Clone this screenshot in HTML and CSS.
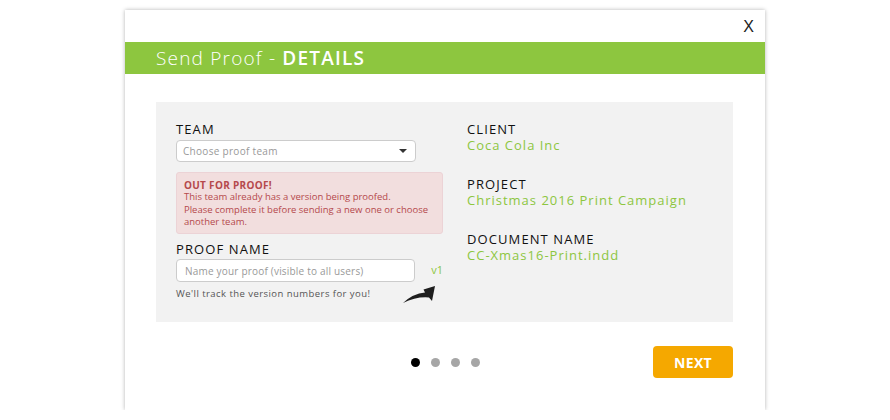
FILE: index.html
```html
<!DOCTYPE html>
<html>
<head>
<meta charset="utf-8">
<link rel="stylesheet" href="styles.css">
</head>
<body>
<div class="modal">
  <div class="topbar"><span class="close">X</span></div>
  <div class="titlebar">Send Proof - <b>DETAILS</b></div>
  <div class="content">
    <div class="panel">
      <div class="col-left">
        <div class="label">TEAM</div>
        <div class="select"><span>Choose proof team</span><span class="caret"></span></div>
        <div class="alert">
          <div class="alert-title">OUT FOR PROOF!</div>
          <div>This team already has a version being proofed.</div>
          <div>Please complete it before sending a new one or choose another team.</div>
        </div>
        <div class="label label-proof">PROOF NAME</div>
        <div class="proof-row">
          <div class="input">Name your proof (visible to all users)</div>
          <span class="version">v1</span>
        </div>
        <div class="helper-row">
          <span class="helper">We'll track the version numbers for you!</span>
          <svg class="arrow" width="34" height="19" viewBox="0 0 34 19"><path d="M1 18 Q11 8.5 23 7.5 L21.5 4.5 L33 1 L30 16 L27 12.5 Q14 11.5 1 18 Z" fill="#1e1e1e"/></svg>
        </div>
      </div>
      <div class="col-right">
        <div class="info"><div class="label">CLIENT</div><div class="value">Coca Cola Inc</div></div>
        <div class="info"><div class="label">PROJECT</div><div class="value">Christmas 2016 Print Campaign</div></div>
        <div class="info"><div class="label">DOCUMENT NAME</div><div class="value">CC-Xmas16-Print.indd</div></div>
      </div>
    </div>
    <div class="footer">
      <div class="dots"><span class="dot active"></span><span class="dot"></span><span class="dot"></span><span class="dot"></span></div>
      <button class="next">NEXT</button>
    </div>
  </div>
</div>
</body>
</html>
```
FILE: styles.css
```css
* { box-sizing: border-box; }
body {
  margin: 0;
  background: #fff;
  font-family: "Open Sans", "Liberation Sans", sans-serif;
  color: #111;
}
.modal {
  margin: 10px 0 0 125px;
  width: 640px;
  height: 400px;
  background: #fff;
  box-shadow: 0 0 4px rgba(0,0,0,0.3);
}
.topbar {
  height: 32px;
  display: flex;
  justify-content: flex-end;
  align-items: center;
  padding: 1px 11px 0 0;
}
.close {
  font-family: "Liberation Sans", sans-serif;
  font-size: 16px;
  color: #222;
}
.titlebar {
  height: 32px;
  background: #8dc63f;
  color: #fff;
  font-size: 19px;
  font-weight: 300;
  line-height: 32px;
  padding-left: 31px;
  letter-spacing: 1.2px;
}
.titlebar b { font-weight: 600; }
.content {
  padding: 28px 32px 0 31px;
}
.panel {
  background: #f2f2f2;
  height: 220px;
  display: flex;
  padding: 19px 20px 0 20px;
}
.col-left { width: 267px; }
.col-right { margin-left: 24px; }
.label {
  font-size: 13px;
  line-height: 16px;
  color: #111;
  letter-spacing: 1.1px;
}
.select {
  margin-top: 3px;
  width: 240px;
  height: 22px;
  background: #fff;
  border: 1px solid #ccc;
  border-radius: 4px;
  display: flex;
  align-items: center;
  justify-content: space-between;
  padding: 0 8px 0 6px;
  font-size: 10px;
  letter-spacing: 0.3px;
  color: #999;
}
.caret {
  width: 0; height: 0;
  border-left: 4px solid transparent;
  border-right: 4px solid transparent;
  border-top: 4px solid #333;
}
.alert {
  margin-top: 10px;
  height: 62px;
  background: #f2dede;
  border: 1px solid #ecd3d6;
  border-radius: 3px;
  padding: 6px 7px;
  font-size: 9.5px;
  line-height: 12.4px;
  color: #b5494c;
}
.alert-title { font-weight: 700; font-size: 10px; letter-spacing: 0.3px; }
.label-proof { margin-top: 7px; }
.proof-row {
  display: flex;
  align-items: center;
  margin-top: 2px;
}
.input {
  width: 240px;
  height: 23px;
  background: #fff;
  border: 1px solid #ccc;
  border-radius: 4px;
  font-size: 10px;
  letter-spacing: 0.2px;
  color: #999;
  padding: 0 8px;
  display: flex;
  align-items: center;
}
.version {
  margin-left: 16px;
  color: #8dc63f;
  font-size: 11px;
  margin-top: -3px;
}
.helper-row {
  display: flex;
  align-items: flex-start;
  margin-top: 5px;
}
.helper {
  font-size: 9.5px;
  letter-spacing: 0.45px;
  color: #555;
  width: 226px;
  line-height: 13px;
}
.arrow { margin-top: -2px; }
.info { margin-bottom: 23px; }
.info .value {
  font-size: 13px;
  line-height: 16px;
  color: #8dc63f;
  letter-spacing: 1px;
}
.footer {
  position: relative;
  height: 80px;
  display: flex;
  align-items: center;
  justify-content: flex-end;
}
.dots {
  position: absolute;
  left: 0; right: 0;
  top: 36px;
  display: flex;
  justify-content: center;
  gap: 11px;
  margin-left: 1px;
}
.dot {
  width: 9px; height: 9px;
  border-radius: 50%;
  background: #a6a6a6;
}
.dot.active { background: #000; }
.next {
  position: relative;
  width: 80px;
  height: 32px;
  background: #f5a800;
  border: none;
  border-radius: 4px;
  color: #fff;
  font-family: "Open Sans", sans-serif;
  font-weight: 700;
  font-size: 14px;
  letter-spacing: 0.3px;
}
```
